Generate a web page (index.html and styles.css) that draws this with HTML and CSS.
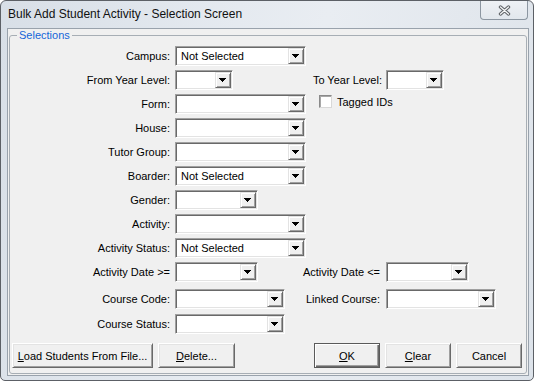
FILE: index.html
```html
<!DOCTYPE html>
<html lang="en">
<head>
<meta charset="utf-8">
<title>Bulk Add Student Activity - Selection Screen</title>
<link rel="stylesheet" href="styles.css">
</head>
<body>
<div class="window">
  <div class="titlebar">
    <div class="title">Bulk Add Student Activity - Selection Screen</div>
    <div class="close">
      <svg width="13" height="11" viewBox="0 0 13 11">
        <path d="M2.5 2 L10.5 9 M10.5 2 L2.5 9" stroke="#5e6266" stroke-width="3.4" stroke-linecap="round" fill="none"/>
        <path d="M2.5 2 L10.5 9 M10.5 2 L2.5 9" stroke="#f6f7f8" stroke-width="1.3" stroke-linecap="round" fill="none"/>
      </svg>
    </div>
  </div>
  <div class="client">
    <fieldset class="group">
      <legend class="group-title">Selections</legend>
      <div class="form">
        <div class="lbl c1">Campus:</div>
        <div class="combo c2 w-131"><span class="value">Not Selected</span><span class="arrow"></span></div>

        <div class="lbl c1">From Year Level:</div>
        <div class="combo c2 w-58"><span class="value"></span><span class="arrow"></span></div>
        <div class="lbl c3">To Year Level:</div>
        <div class="combo c4 w-58"><span class="value"></span><span class="arrow"></span></div>

        <div class="lbl c1">Form:</div>
        <div class="combo c2 w-131"><span class="value"></span><span class="arrow"></span></div>
        <div class="check c34"><span class="box"></span><span>Tagged IDs</span></div>

        <div class="lbl c1">House:</div>
        <div class="combo c2 w-131"><span class="value"></span><span class="arrow"></span></div>

        <div class="lbl c1">Tutor Group:</div>
        <div class="combo c2 w-131"><span class="value"></span><span class="arrow"></span></div>

        <div class="lbl c1">Boarder:</div>
        <div class="combo c2 w-131"><span class="value">Not Selected</span><span class="arrow"></span></div>

        <div class="lbl c1">Gender:</div>
        <div class="combo c2 w-83"><span class="value"></span><span class="arrow"></span></div>

        <div class="lbl c1">Activity:</div>
        <div class="combo c2 w-131"><span class="value"></span><span class="arrow"></span></div>

        <div class="lbl c1">Activity Status:</div>
        <div class="combo c2 w-131"><span class="value">Not Selected</span><span class="arrow"></span></div>

        <div class="lbl c1">Activity Date &gt;=</div>
        <div class="combo c2 w-83"><span class="value"></span><span class="arrow"></span></div>
        <div class="lbl c3 lbl-tight">Activity Date &lt;=</div>
        <div class="combo c4 w-83"><span class="value"></span><span class="arrow"></span></div>

        <div class="lbl c1">Course Code:</div>
        <div class="combo c2 w-110"><span class="value"></span><span class="arrow"></span></div>
        <div class="lbl c3 lbl-tight">Linked Course:</div>
        <div class="combo c4 w-110"><span class="value"></span><span class="arrow"></span></div>

        <div class="lbl c1">Course Status:</div>
        <div class="combo c2 w-110"><span class="value"></span><span class="arrow"></span></div>
      </div>
      <div class="buttons">
        <div class="btn-group">
          <button class="btn w-load"><u>L</u>oad Students From File...</button>
          <button class="btn w-delete"><u>D</u>elete...</button>
        </div>
        <div class="btn-group">
          <button class="btn btn-default w-66"><u>O</u>K</button>
          <button class="btn w-66"><u>C</u>lear</button>
          <button class="btn w-66">Cancel</button>
        </div>
      </div>
    </fieldset>
  </div>
</div>
</body>
</html>
```
FILE: styles.css
```css
html, body {
  margin: 0;
  padding: 0;
  background: #ffffff;
}

body {
  font-family: "Liberation Sans", Arial, sans-serif;
  font-size: 11px;
  color: #000;
}

.window {
  width: 534px;
  height: 381px;
  box-sizing: border-box;
  border: 1px solid #5c6066;
  border-radius: 6px 6px 5px 5px;
  background: linear-gradient(100deg, #d8dfe7 0%, #e5eaf0 40%, #e9edf2 55%, #dde3ea 100%);
  display: flex;
  flex-direction: column;
}

.titlebar {
  flex: none;
  height: 27px;
  display: flex;
  justify-content: space-between;
  align-items: flex-start;
}

.title {
  padding: 6px 0 0 7px;
  font-family: "Liberation Sans", Arial, sans-serif;
  font-size: 12px;
  line-height: 15px;
  color: #111;
}

.close {
  width: 48px;
  height: 19px;
  box-sizing: border-box;
  margin-right: 5px;
  border: 1px solid #8c96a1;
  border-top: 0;
  border-radius: 0 0 4px 4px;
  background: linear-gradient(#eef1f5, #e2e7ed);
  display: flex;
  align-items: center;
  justify-content: center;
}

.close svg {
  display: block;
}

.client {
  flex: 1;
  margin: 0 4px 4px 6px;
  border: 1px solid #99a2ac;
  background: #f0f0f0;
  display: flex;
  flex-direction: column;
}

.group {
  flex: 1;
  margin: 0 1px 1px;
  padding: 0;
  border: 1px solid #a7aeb5;
  border-radius: 3px;
  min-width: 0;
}

.group-title {
  margin-left: 7px;
  padding: 0 2px;
  font-size: 11px;
  line-height: 13px;
  color: #1566d8;
}

.form {
  display: grid;
  grid-template-columns: 165px 123px 88px auto;
  grid-template-rows: repeat(10, 20px) 23px 21px;
  row-gap: 4px;
  align-items: end;
  margin-top: 4px;
}

.c1 { grid-column: 1; }
.c2 { grid-column: 2; }
.c3 { grid-column: 3; }
.c4 { grid-column: 4; }
.c34 { grid-column: 3 / 5; }

.lbl {
  height: 20px;
  display: flex;
  align-items: center;
  justify-content: flex-end;
  padding-right: 5px;
  white-space: nowrap;
}

.lbl.c3 {
  padding-right: 4px;
}

.lbl.c3.lbl-tight {
  padding-right: 6px;
}

.combo {
  height: 20px;
  box-sizing: border-box;
  padding: 1px;
  border: 1px solid;
  border-color: #a0a0a0 #ffffff #ffffff #a0a0a0;
  box-shadow: inset 1px 1px 0 #696969, inset -1px -1px 0 #e3e3e3;
  background: #ffffff;
  display: flex;
  align-items: center;
}

.w-131 { width: 131px; }
.w-110 { width: 110px; }
.w-83 { width: 83px; }
.w-58 { width: 58px; }

.value {
  flex: 1;
  padding-left: 4px;
  white-space: nowrap;
  overflow: hidden;
  line-height: 16px;
}

.arrow {
  flex: none;
  display: block;
  width: 16px;
  height: 16px;
  box-sizing: border-box;
  background: #f0f0f0;
  border: 1px solid;
  border-color: #e3e3e3 #696969 #696969 #e3e3e3;
  box-shadow: inset 1px 1px 0 #ffffff, inset -1px -1px 0 #a0a0a0;
}

.arrow::before {
  content: "";
  display: block;
  width: 7px;
  height: 4px;
  margin: 5px 0 0 3px;
  background: #000;
  clip-path: polygon(0 0, 7px 0, 7px 1px, 6px 1px, 6px 2px, 5px 2px, 5px 3px, 4px 3px, 4px 4px, 3px 4px, 3px 3px, 2px 3px, 2px 2px, 1px 2px, 1px 1px, 0 1px);
}

.check {
  align-self: start;
  margin: 1px 0 0 21px;
  display: flex;
  align-items: center;
  gap: 5px;
  height: 13px;
  white-space: nowrap;
}

.box {
  width: 13px;
  height: 13px;
  box-sizing: border-box;
  border: 1px solid;
  border-color: #8a8a8a #d8d8d8 #d8d8d8 #8a8a8a;
  box-shadow: inset 1px 1px 0 #a8a8a8;
  background: #ffffff;
}

.buttons {
  display: flex;
  justify-content: space-between;
  margin-top: 9px;
  padding: 0 4px 0 2px;
}

.btn-group {
  display: flex;
  gap: 5px;
}

.btn {
  height: 25px;
  box-sizing: border-box;
  margin: 0;
  padding: 0;
  background: #f0f0f0;
  border: 1px solid;
  border-color: #ffffff #696969 #696969 #ffffff;
  box-shadow: inset 1px 1px 0 #e3e3e3, inset -1px -1px 0 #a0a0a0;
  font: inherit;
  color: #000;
  display: flex;
  align-items: center;
  justify-content: center;
}

.btn-default {
  border-color: #5a5a5a;
  box-shadow: inset 1px 1px 0 #ffffff, inset -1px -1px 0 #696969, inset -2px -2px 0 #a0a0a0;
}

.w-load { width: 141px; }
.w-delete { width: 77px; }
.w-66 { width: 66px; }
```
